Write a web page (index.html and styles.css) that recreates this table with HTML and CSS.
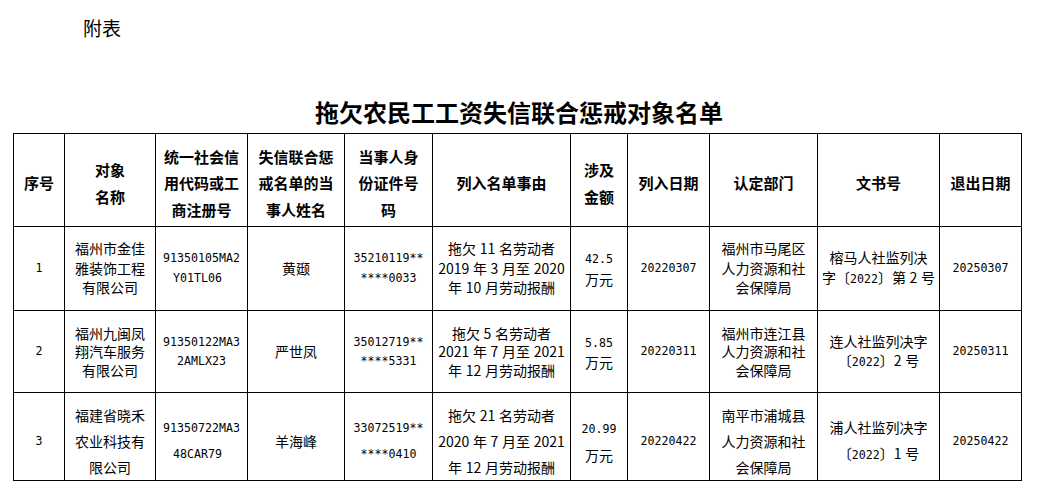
FILE: index.html
```html
<!DOCTYPE html>
<html lang="zh-CN">
<head>
<meta charset="utf-8">
<title>附表</title>
<link rel="stylesheet" href="styles.css">
</head>
<body>
<div class="fubiao">附表</div>
<h1 class="title">拖欠农民工工资失信联合惩戒对象名单</h1>
<table class="list">
  <colgroup>
    <col class="c1"><col class="c2"><col class="c3"><col class="c4"><col class="c5"><col class="c6"><col class="c7"><col class="c8"><col class="c9"><col class="c10"><col class="c11">
  </colgroup>
  <thead>
    <tr class="head">
      <th>序号</th>
      <th>对象<br>名称</th>
      <th>统一社会信<br>用代码或工<br>商注册号</th>
      <th>失信联合惩<br>戒名单的当<br>事人姓名</th>
      <th>当事人身<br>份证件号<br>码</th>
      <th>列入名单事由</th>
      <th>涉及<br>金额</th>
      <th>列入日期</th>
      <th>认定部门</th>
      <th>文书号</th>
      <th>退出日期</th>
    </tr>
  </thead>
  <tbody>
    <tr class="r1">
      <td class="mono">1</td>
      <td>福州市金佳<br>雅装饰工程<br>有限公司</td>
      <td class="mono">91350105MA2<br><span class="ind">Y01TL06</span></td>
      <td>黄颋</td>
      <td class="mono">35210119**<br>****0033</td>
      <td>拖欠 11 名劳动者<br>2019 年 3 月至 2020<br>年 10 月劳动报酬</td>
      <td><span class="num">42.5</span><br>万元</td>
      <td class="mono">20220307</td>
      <td>福州市马尾区<br>人力资源和社<br>会保障局</td>
      <td>榕马人社监列决<br>字〔<span class="num">2022</span>〕第 2 号</td>
      <td class="mono">20250307</td>
    </tr>
    <tr class="r2">
      <td class="mono">2</td>
      <td>福州九闽凤<br>翔汽车服务<br>有限公司</td>
      <td class="mono">91350122MA3<br>2AMLX23</td>
      <td>严世凤</td>
      <td class="mono">35012719**<br>****5331</td>
      <td>拖欠 5 名劳动者<br>2021 年 7 月至 2021<br>年 12 月劳动报酬</td>
      <td><span class="num">5.85</span><br>万元</td>
      <td class="mono">20220311</td>
      <td>福州市连江县<br>人力资源和社<br>会保障局</td>
      <td>连人社监列决字<br>〔<span class="num">2022</span>〕2 号</td>
      <td class="mono">20250311</td>
    </tr>
    <tr class="r3">
      <td class="mono">3</td>
      <td>福建省晓禾<br>农业科技有<br>限公司</td>
      <td class="mono">91350722MA3<br><span class="ind">48CAR79</span></td>
      <td>羊海峰</td>
      <td class="mono">33072519**<br>****0410</td>
      <td>拖欠 21 名劳动者<br>2020 年 7 月至 2021<br>年 12 月劳动报酬</td>
      <td><span class="num">20.99</span><br>万元</td>
      <td class="mono">20220422</td>
      <td>南平市浦城县<br>人力资源和社<br>会保障局</td>
      <td>浦人社监列决字<br>〔<span class="num">2022</span>〕1 号</td>
      <td class="mono">20250422</td>
    </tr>
  </tbody>
</table>
</body>
</html>
```

FILE: styles.css
```css
html, body {
  margin: 0;
  padding: 0;
  background: #fff;
  color: #000;
}

body {
  width: 1038px;
  font-family: "Noto Sans CJK SC", "Noto Sans", sans-serif;
}

.fubiao {
  font-size: 19px;
  line-height: 27px;
  padding: 14px 0 0 83px;
  font-weight: 400;
}

.title {
  margin: 56px 0 0 0;
  text-align: center;
  font-size: 24px;
  line-height: 30px;
  font-weight: 700;
}

.list {
  margin: 6px 0 0 13px;
  border-collapse: collapse;
  table-layout: fixed;
  width: 1008px;
  border: 1px solid #000;
}

.c1 { width: 51px; }
.c2 { width: 91px; }
.c3 { width: 92px; }
.c4 { width: 97px; }
.c5 { width: 88px; }
.c6 { width: 138px; }
.c7 { width: 57px; }
.c8 { width: 82px; }
.c9 { width: 108px; }
.c10 { width: 122px; }
.c11 { width: 82px; }

.list th,
.list td {
  border: 1px solid #000;
  padding: 0 2px;
  text-align: center;
  vertical-align: middle;
  white-space: nowrap;
  overflow: hidden;
}

.list th {
  font-size: 15px;
  font-weight: 700;
  line-height: 26.5px;
  padding-top: 7px;
}

.list td {
  font-size: 14px;
  font-weight: 400;
  word-spacing: 0.5px;
}

.head { height: 93px; }
.r1 { height: 84px; }
.r2 { height: 82px; }
.r3 { height: 81px; }

.r1 td { line-height: 19.5px; }
.r2 td { line-height: 18.5px; }
.r3 td { line-height: 26px; padding-top: 9px; }

.list td.mono,
.num {
  font-family: "DejaVu Sans Mono", "Liberation Mono", monospace;
  font-size: 11.6px;
  word-spacing: 0;
}

.ind {
  padding-right: 8px;
}
```
